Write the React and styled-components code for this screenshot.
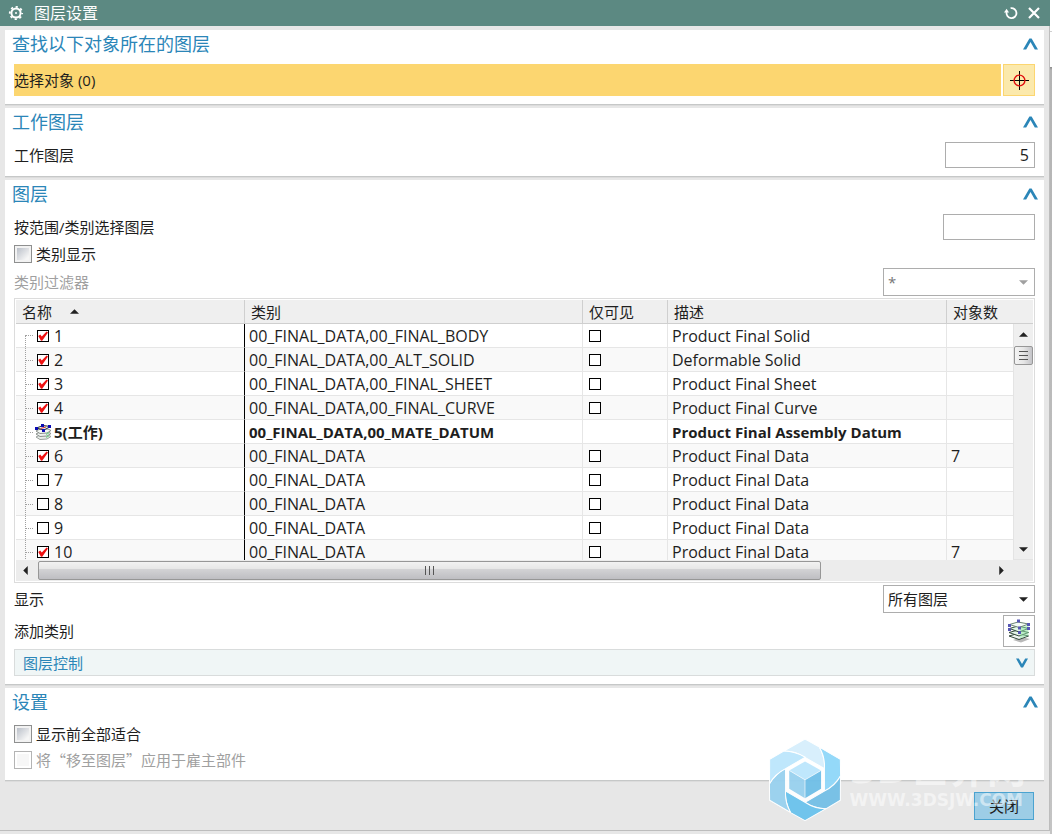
import React, { useState } from 'react';
import styled, { createGlobalStyle, css } from 'styled-components';

const GlobalStyle = createGlobalStyle`
  * {
    box-sizing: border-box;
  }
  body {
    margin: 0;
    background: #e7e7e7;
    color: #1e1e1e;
    font-family: 'Open Sans', 'Noto Sans CJK SC', sans-serif;
    font-size: 15px;
    line-height: 20px;
  }
  button, input, select {
    margin: 0;
    padding: 0;
    font: inherit;
    color: inherit;
  }
`;

const Page = styled.div`
  display: flex;
  min-height: 100vh;
`;

const Dialog = styled.main`
  flex: 1;
  min-width: 0;
  position: relative;
`;

const Backdrop = styled.div`
  width: 2px;
  background: linear-gradient(#fff 31px, #d0d0d0 31px, #d0d0d0 32px, #fff 32px, #fff 67px, #8c8c8c 67px, #b4b4b4 70px, #c4c4c4);
`;

const TitleBar = styled.header`
  display: flex;
  align-items: center;
  gap: 10px;
  height: 26px;
  padding: 0 10px 0 8px;
  background: #5c8982;
  color: #fff;
  h1 {
    flex: 1;
    margin: 0;
    font-size: 16px;
    font-weight: 400;
  }
  svg {
    display: block;
  }
`;

const IconButton = styled.button`
  border: 0;
  background: none;
  color: inherit;
`;

const Body = styled.div`
  display: flex;
  flex-direction: column;
  gap: 4px;
  padding: 4px 5px 10px;
  border-right: 1px solid #bdbdbd;
  border-bottom: 1px solid #bdbdbd;
`;

const StyledPanel = styled.section`
  background: #fff;
  box-shadow: 0 1px 0 #c6c8c8, 0 2px 0 #dcdcdc;
  .Panel__Header {
    display: flex;
    align-items: center;
    justify-content: space-between;
    height: 28px;
    padding: 0 6px 0 7px;
    color: #2b86b8;
  }
  .Panel__Title {
    margin: 0;
    font-size: 18px;
    line-height: 28px;
    font-weight: 400;
  }
  .Panel__Body {
    display: flex;
    flex-direction: column;
    gap: 2px;
    padding: 6px 9px 8px;
  }
  svg {
    display: block;
  }
`;

const Row = styled.div`
  display: flex;
  align-items: center;
  justify-content: space-between;
  min-height: 24px;
  color: ${p => (p.$muted ? '#a0a0a0' : 'inherit')};
`;

const SelectRow = styled.div`
  display: flex;
  gap: 2px;
  height: 32px;
  .SelectRow__Label {
    flex: 1;
    display: flex;
    align-items: center;
    background: #fcd670;
  }
`;

const SquareButton = styled.button`
  display: flex;
  align-items: center;
  justify-content: center;
  width: 32px;
  height: 32px;
  border: 1px solid ${p => (p.$active ? '#fcd670' : '#adadad')};
  background: ${p => (p.$active ? '#fbe9ac' : '#fff')};
`;

const TextInput = styled.input`
  width: ${p => p.$width};
  height: 26px;
  padding: 0 5px;
  border: 1px solid #adadad;
  background: #fff;
  font-size: 16px;
  text-align: right;
`;

const StyledSelect = styled.div`
  position: relative;
  width: 152px;
  select {
    display: block;
    width: 100%;
    height: 28px;
    padding: 0 4px;
    border: 1px solid #adadad;
    border-radius: 0;
    background: #fff;
    appearance: none;
    opacity: 1;
  }
  select:disabled {
    color: #777;
  }
  svg {
    position: absolute;
    right: 7px;
    top: 12px;
    pointer-events: none;
  }
`;

// The CJK family leads here so that curly quotes take their full width
const CheckLabel = styled.label`
  display: flex;
  align-items: center;
  gap: 4px;
  color: ${p => (p.$muted ? '#a0a0a0' : 'inherit')};
  font-family: 'Noto Sans CJK SC', sans-serif;
`;

const BigCheck = styled.input.attrs({ type: 'checkbox' })`
  appearance: none;
  width: 18px;
  height: 18px;
  border: 1px solid #8e8f8f;
  padding: 1px;
  background: linear-gradient(135deg, #b4bac4, #f6f6f6 80%) content-box, #f0f0f0;
  box-shadow: inset 0 0 0 2px #f2f2f2;
  &:checked {
    background: #5c8982 content-box;
  }
  &:disabled {
    border-color: #b4b4b4;
    background: #f7f7f7;
    box-shadow: inset 0 0 0 2px #fff;
  }
`;

const StyledSmallCheck = styled.span`
  position: relative;
  display: block;
  width: 12px;
  height: 12px;
  input {
    display: block;
    appearance: none;
    width: 12px;
    height: 12px;
    border: 1px solid #000;
    background: #fff;
  }
  svg {
    position: absolute;
    left: 0;
    top: 0;
    pointer-events: none;
  }
`;

const TableFrame = styled.div`
  border: 1px solid #dcdcdc;
  padding: 1px;
`;

const TableView = styled.div`
  display: flex;
  height: 260px;
  overflow: hidden;
`;

const Table = styled.table`
  flex: 1;
  width: 100%;
  min-width: 0;
  table-layout: fixed;
  border-collapse: separate;
  border-spacing: 0;
  th {
    height: 24px;
    padding: 0 6px;
    border-right: 1px solid #cfcfcf;
    border-bottom: 1px solid #cfcfcf;
    background: #efefef;
    font-weight: 400;
    text-align: left;
  }
  th:last-child {
    border-right: 0;
  }
  .Table__Sort {
    display: flex;
    align-items: center;
    gap: 18px;
  }
  td {
    height: 24px;
    padding: 0 4px;
    border-right: 1px solid #e6e6e6;
    border-bottom: 1px solid #e6e6e6;
    white-space: nowrap;
    overflow: hidden;
  }
  td:first-child {
    padding: 0 0 0 9px;
    border-right-color: #000;
  }
  td:nth-child(3) {
    padding-left: 6px;
  }
  td:last-child {
    border-right: 0;
  }
`;

const LayerRow = styled.tr`
  background: ${p => (p.$odd ? '#f9f9f9' : '#fff')};
  font-size: 16px;
  ${p =>
    p.$work &&
    css`
      font-size: 15px;
      font-weight: 700;
    `}
`;

const TreeCell = styled.div`
  display: flex;
  align-items: center;
  height: 23px;
  .TreeCell__Line {
    align-self: stretch;
    width: 9px;
    border-left: 1px dotted #a0a0a0;
    background: repeating-linear-gradient(90deg, #a0a0a0 0 1px, transparent 1px 2px) 0 12px / 9px 1px no-repeat;
  }
  .TreeCell__Line--first {
    align-self: flex-end;
    height: 12px;
    background-position: 0 0;
  }
  label {
    display: flex;
    align-items: center;
    gap: 5px;
    padding-left: 3px;
  }
  .TreeCell__Work {
    display: flex;
    align-items: center;
    gap: 2px;
    padding-left: 1px;
  }
`;

const VScroll = styled.div`
  display: flex;
  flex-direction: column;
  width: 20px;
  background: #efefef;
  .VScroll__Cap {
    height: 24px;
    border-bottom: 1px solid #cfcfcf;
  }
  .VScroll__Track {
    flex: 1;
    display: flex;
    flex-direction: column;
    align-items: center;
    padding: 8px 0 7px;
    border-left: 1px solid #e4e4e4;
    border-bottom: 1px solid #e4e4e4;
  }
  .VScroll__Thumb {
    display: flex;
    align-items: center;
    justify-content: center;
    width: 19px;
    height: 19px;
    margin: 9px 0 auto;
    border: 1px solid #979797;
    border-radius: 2px;
    background: linear-gradient(90deg, #f4f4f4, #e6e6e6 50%, #c4c4c8);
  }
`;

const HScroll = styled.div`
  display: flex;
  align-items: center;
  height: 21px;
  padding: 0 29px 0 7px;
  background: #ececec;
  .HScroll__Track {
    flex: 1;
    margin: 0 6px 0 10px;
  }
  .HScroll__Thumb {
    display: flex;
    align-items: center;
    justify-content: center;
    width: 82%;
    height: 19px;
    border: 1px solid #979797;
    border-radius: 2px;
    background: linear-gradient(#f2f2f2, #e6e6e6 42%, #d2d2d4 44%, #bebec2);
  }
`;

const SubPanelButton = styled.button`
  display: flex;
  align-items: center;
  justify-content: space-between;
  height: 27px;
  padding: 0 6px 0 8px;
  border: 1px solid #d9dcdc;
  background: #f0f6f6;
  color: #2b86b8;
`;

const Footer = styled.footer`
  display: flex;
  justify-content: flex-end;
  padding: 8px 10px 0;
`;

const CloseButton = styled.button`
  width: 60px;
  height: 28px;
  border: 1px solid #4ba3d0;
  background: #9dcde6;
`;

// Site mark laid over the lower right corner of the dialog
const StyledWatermark = styled.div`
  position: absolute;
  right: 24px;
  bottom: 13px;
  display: flex;
  align-items: center;
  gap: 8px;
  pointer-events: none;
  color: rgba(255, 255, 255, 0.5);
  font-family: 'DejaVu Sans', 'Noto Sans CJK SC', sans-serif;
  font-weight: 700;
  .Watermark__Name {
    font-size: 39px;
    line-height: 40px;
  }
  .Watermark__Url {
    font-size: 17px;
    line-height: 20px;
  }
  svg {
    display: block;
    opacity: 0.95;
  }
`;

const layers = [
  { id: 1, on: true, category: '00_FINAL_DATA,00_FINAL_BODY', desc: 'Product Final Solid' },
  { id: 2, on: true, category: '00_FINAL_DATA,00_ALT_SOLID', desc: 'Deformable Solid' },
  { id: 3, on: true, category: '00_FINAL_DATA,00_FINAL_SHEET', desc: 'Product Final Sheet' },
  { id: 4, on: true, category: '00_FINAL_DATA,00_FINAL_CURVE', desc: 'Product Final Curve' },
  { id: 5, work: true, category: '00_FINAL_DATA,00_MATE_DATUM', desc: 'Product Final Assembly Datum' },
  { id: 6, on: true, category: '00_FINAL_DATA', desc: 'Product Final Data', count: 7 },
  { id: 7, on: false, category: '00_FINAL_DATA', desc: 'Product Final Data' },
  { id: 8, on: false, category: '00_FINAL_DATA', desc: 'Product Final Data' },
  { id: 9, on: false, category: '00_FINAL_DATA', desc: 'Product Final Data' },
  { id: 10, on: true, category: '00_FINAL_DATA', desc: 'Product Final Data', count: 7 },
];

const Gear = () => (
  <svg width="16" height="16" viewBox="0 0 16 16" fill="none" stroke="#fff">
    <circle cx="8" cy="8" r="4.6" strokeWidth="2" />
    <circle cx="8" cy="8" r="6.2" strokeWidth="1.8" strokeDasharray="2.2 2.67" strokeDashoffset="1.1" />
    <circle cx="8" cy="8" r="1" fill="#fff" stroke="none" />
  </svg>
);

const ResetIcon = () => (
  <svg width="14" height="14" viewBox="0 0 14 14" fill="none">
    <path d="M6.6 2.2A5 5 0 1 1 2.6 6" stroke="#fff" strokeWidth="1.8" />
    <path d="M0 6.4L2.6 2.8L5 6.4Z" fill="#fff" />
  </svg>
);

const CloseIcon = () => (
  <svg width="12" height="12" viewBox="0 0 12 12">
    <path d="M1 1L11 11M11 1L1 11" stroke="#fff" strokeWidth="2.2" />
  </svg>
);

const Chevron = () => (
  <svg width="15" height="12" viewBox="0 0 15 12">
    <path d="M0 11.5L6.4 0.5H8.6L15 11.5H11.8L7.5 4L3.2 11.5Z" fill="#2b86b8" />
  </svg>
);

const ChevronDown = () => (
  <svg width="12" height="10" viewBox="0 0 12 10">
    <path d="M0 0.5H2.8L6 6L9.2 0.5H12L7 9.5H5Z" fill="#2b86b8" />
  </svg>
);

const Crosshair = () => (
  <svg width="19" height="19" viewBox="0 0 19 19" fill="none">
    <path d="M9.5 0V19M0 9.5H19" stroke="#000" />
    <circle cx="9.5" cy="9.5" r="5.4" stroke="#e01010" strokeWidth="1.4" />
  </svg>
);

const Arrow = ({ dir = 'down', color = '#222' }) => {
  const shapes = {
    down: 'M0 0H8L4 4Z',
    up: 'M0 4H8L4 0Z',
    left: 'M4 0V8L0 4Z',
    right: 'M0 0V8L4 4Z',
  };
  const upright = dir === 'up' || dir === 'down';
  const w = upright ? 8 : 4;
  const h = upright ? 4 : 8;
  return (
    <svg width={w + 1} height={h + 1} viewBox={`0 0 ${w} ${h}`}>
      <path d={shapes[dir]} fill={color} />
    </svg>
  );
};

const WorkLayerIcon = () => (
  <svg width="17" height="16" viewBox="0 0 17 16">
    <path d="M1 13L4 11.5L13 11L16 12.5L12 15L5 15.5Z" fill="#e8ecea" stroke="#9aa09c" />
    <path d="M1 10L4 8.5L13 8L16 9.5L12 12L5 12.5Z" fill="#eef2f0" stroke="#8a908c" />
    <path d="M1 7L4 5.5L13 5L16 6.5L12 9L5 9.5Z" fill="#f4f8f5" stroke="#8a908c" />
    <path d="M11 9.5L14 8V9.5L11 11ZM11 12.5L14 11V12.5L11 14Z" fill="#7fd092" />
    <path d="M1.5 4L8 1.5L15.5 2.5L9 6Z" fill="#d4f0f4" stroke="#333" />
    <path d="M5.5 4.5L11 3" stroke="#e03030" />
    <path d="M0 3H3V6H0ZM6 0H9V3H6ZM13 1H16V4H13ZM7 5H10V8H7Z" fill="#0a0ab4" />
  </svg>
);

const AddCategoryIcon = () => (
  <svg width="24" height="24" viewBox="0 0 24 24">
    <path d="M6 21L14 18L23 20L14 23.5Z" fill="#b8b8b8" />
    <path d="M2 17L11 14.5L21.5 17L12 20.5Z" fill="#f0f6f2" stroke="#33483c" />
    <path d="M2 13.5L11 11L21.5 13.5L12 17Z" fill="#e4f4e8" stroke="#33483c" />
    <path d="M2.5 9.5L11 7L21.5 9.5L12 13Z" fill="#e0f6e6" stroke="#33483c" />
    <path d="M2.5 5.5L11 3L21.5 5L12 8.5Z" fill="#f4fbf6" stroke="#6c8474" />
    <path d="M13 8.5L21.5 5.5V16.5L13 19.5Z" fill="#8fe8a6" opacity="0.5" />
    <path
      d="M1 5H4V8H1ZM10 0.5H13V3.5H10ZM20 4H23V7H20ZM1 9H4V12H1ZM11 7.5H14V10.5H11ZM20 8H23V11H20ZM11 12H14V15H11Z"
      fill="#5656b4"
    />
  </svg>
);

const petalColors = ['#d6effc', '#8fd7f9', '#74bfe6', '#6ac3ed', '#98d1ef', '#bce6fc'];

const HexLogo = () => (
  <svg width="72" height="82" viewBox="88 178 214 245">
    <path d="M195 178L302 239V362L195 422L88 362V239Z" fill="#fff" />
    {petalColors.map((color, i) => (
      <path
        key={color}
        d="M132 214L195 178L238 202Q254 232 254 267L195 233Q165 213 132 214Z"
        transform={`rotate(${i * 60} 195 300)`}
        fill={color}
        stroke="#fff"
        strokeWidth="3"
      />
    ))}
    <path d="M195 237L250 268V332L195 363L140 332V268Z" fill="#fff" />
    <path d="M195 245L243 272L195 300L148 272Z" fill="#bce6fc" />
    <path d="M148 272L195 300V355L148 327Z" fill="#98d1ef" />
    <path d="M243 272V327L195 355V300Z" fill="#6fbfe8" />
    <path d="M148 272L195 300L243 272M195 300V355" fill="none" stroke="#fff" strokeWidth="2" />
  </svg>
);

const SmallCheck = ({ checked, ...rest }) => {
  const [on, setOn] = useState(Boolean(checked));
  return (
    <StyledSmallCheck>
      <input type="checkbox" checked={on} onChange={e => setOn(e.target.checked)} {...rest} />
      {on && (
        <svg width="12" height="12" viewBox="0 0 12 12">
          <path d="M1.2 6L3.2 4.6L4.8 6.6L9.6 1.4L11 2.6L5.2 10.8H4Z" fill="#ee1111" />
        </svg>
      )}
    </StyledSmallCheck>
  );
};

const Panel = ({ title, children }) => (
  <StyledPanel>
    <div className="Panel__Header">
      <h2 className="Panel__Title">{title}</h2>
      <IconButton type="button" aria-label={title}>
        <Chevron />
      </IconButton>
    </div>
    <div className="Panel__Body">{children}</div>
  </StyledPanel>
);

const LayerTable = () => (
  <TableFrame>
    <TableView>
      <Table>
        <colgroup>
          <col width="229" />
          <col />
          <col width="85" />
          <col width="279" />
          <col width="66" />
        </colgroup>
        <thead>
          <tr>
            <th>
              <div className="Table__Sort">
                名称
                <Arrow dir="up" />
              </div>
            </th>
            <th>类别</th>
            <th>仅可见</th>
            <th>描述</th>
            <th>对象数</th>
          </tr>
        </thead>
        <tbody>
          {layers.map((layer, i) => (
            <LayerRow key={layer.id} $odd={i % 2 === 1} $work={layer.work}>
              <td>
                <TreeCell>
                  <span className={i === 0 ? 'TreeCell__Line TreeCell__Line--first' : 'TreeCell__Line'} />
                  {layer.work ? (
                    <span className="TreeCell__Work">
                      <WorkLayerIcon />
                      {layer.id}(工作)
                    </span>
                  ) : (
                    <label>
                      <SmallCheck checked={layer.on} />
                      {layer.id}
                    </label>
                  )}
                </TreeCell>
              </td>
              <td>{layer.category}</td>
              <td>{!layer.work && <SmallCheck aria-label={`仅可见 ${layer.id}`} />}</td>
              <td>{layer.desc}</td>
              <td>{layer.count}</td>
            </LayerRow>
          ))}
        </tbody>
      </Table>
      <VScroll>
        <div className="VScroll__Cap" />
        <div className="VScroll__Track">
          <Arrow dir="up" />
          <div className="VScroll__Thumb">
            <svg width="9" height="11" viewBox="0 0 9 11">
              <path d="M0 1.5H9M0 5.5H9M0 9.5H9" stroke="#555" />
            </svg>
          </div>
          <Arrow />
        </div>
      </VScroll>
    </TableView>
    <HScroll>
      <Arrow dir="left" />
      <div className="HScroll__Track">
        <div className="HScroll__Thumb">
          <svg width="11" height="9" viewBox="0 0 11 9">
            <path d="M1.5 0V9M5.5 0V9M9.5 0V9" stroke="#555" />
          </svg>
        </div>
      </div>
      <Arrow dir="right" />
    </HScroll>
  </TableFrame>
);

const Watermark = () => (
  <StyledWatermark>
    <HexLogo />
    <div>
      <div className="Watermark__Name">3D世界网</div>
      <div className="Watermark__Url">WWW.3DSJW.COM</div>
    </div>
  </StyledWatermark>
);

const App = () => (
  <>
    <GlobalStyle />
    <Page>
      <Dialog>
        <TitleBar>
          <Gear />
          <h1>图层设置</h1>
          <IconButton type="button" aria-label="重置">
            <ResetIcon />
          </IconButton>
          <IconButton type="button" aria-label="关闭">
            <CloseIcon />
          </IconButton>
        </TitleBar>
        <Body>
          <Panel title="查找以下对象所在的图层">
            <SelectRow>
              <div className="SelectRow__Label">选择对象 (0)</div>
              <SquareButton type="button" $active aria-label="选择对象">
                <Crosshair />
              </SquareButton>
            </SelectRow>
          </Panel>

          <Panel title="工作图层">
            <Row>
              <label htmlFor="workLayer">工作图层</label>
              <TextInput id="workLayer" $width="90px" defaultValue="5" />
            </Row>
          </Panel>

          <Panel title="图层">
            <Row>
              <label htmlFor="range">按范围/类别选择图层</label>
              <TextInput id="range" $width="92px" />
            </Row>
            <Row>
              <CheckLabel>
                <BigCheck />
                类别显示
              </CheckLabel>
            </Row>
            <Row $muted>
              <label htmlFor="filter">类别过滤器</label>
              <StyledSelect>
                <select id="filter" disabled>
                  <option>*</option>
                </select>
                <Arrow color="#a0a0a0" />
              </StyledSelect>
            </Row>
            <LayerTable />
            <Row>
              <label htmlFor="show">显示</label>
              <StyledSelect>
                <select id="show">
                  <option>所有图层</option>
                </select>
                <Arrow />
              </StyledSelect>
            </Row>
            <Row>
              <label htmlFor="addCategory">添加类别</label>
              <SquareButton type="button" id="addCategory">
                <AddCategoryIcon />
              </SquareButton>
            </Row>
            <SubPanelButton type="button">
              图层控制
              <ChevronDown />
            </SubPanelButton>
          </Panel>

          <Panel title="设置">
            <Row>
              <CheckLabel>
                <BigCheck />
                显示前全部适合
              </CheckLabel>
            </Row>
            <Row>
              <CheckLabel $muted>
                <BigCheck disabled />
                将“移至图层”应用于雇主部件
              </CheckLabel>
            </Row>
          </Panel>

          <Footer>
            <CloseButton type="button">关闭</CloseButton>
          </Footer>
        </Body>
        <Watermark />
      </Dialog>
      <Backdrop />
    </Page>
  </>
);

export default App;
